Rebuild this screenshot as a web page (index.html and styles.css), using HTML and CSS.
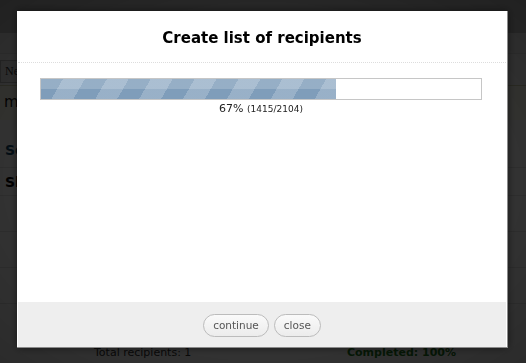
FILE: index.html
```html
<!DOCTYPE html>
<html lang="en">
<head>
    <meta charset="UTF-8">
    <meta name="viewport" content="width=device-width, initial-scale=1.0">
    <title>Create list of recipients</title>
    <link rel="stylesheet" href="styles.css">
</head>
<body>
    <div class="pagina">
        <div class="topo"></div>
        <div class="faixa"></div>
        <div class="barra_ferramentas">
            <button class="btn_novo">New</button>
        </div>
        <div class="aviso">mailing</div>
        <div class="linha linha_alta"><a class="link">Select recipients</a></div>
        <div class="linha"><b>Show recipients</b></div>
        <div class="linha vazia"></div>
        <div class="linha vazia"></div>
        <div class="linha vazia"></div>
        <div class="rodape_pagina">
            <span>Total recipients: 1</span>
            <b class="completo">Completed: 100%</b>
        </div>
    </div>

    <div class="sombra"></div>

    <div class="janela">
        <div class="janela_topo">
            <h1 class="titulo">Create list of recipients</h1>
        </div>
        <div class="janela_corpo">
            <div class="progresso">
                <div class="progresso_barra" style="width: 67%"></div>
            </div>
            <p class="progresso_texto">67% <small>(1415/2104)</small></p>
        </div>
        <div class="janela_rodape">
            <button class="btn">continue</button>
            <button class="btn">close</button>
        </div>
    </div>
</body>
</html>
```

FILE: styles.css
```css
*{
    margin: 0;
    padding: 0;
    box-sizing: border-box;
}
body{
    width: 526px;
    height: 363px;
    overflow: hidden;
    font-family: "DejaVu Sans", Verdana, sans-serif;
    background-color: #fff;
}

/* pagina de fundo */
.pagina{
    height: 363px;
    display: flex;
    flex-direction: column;
}
.topo{
    height: 33px;
    background-color: #c4c4c4;
}
.faixa{
    height: 21px;
    background-color: #f2f2f2;
    border-bottom: 1px solid #e0e0e0;
}
.barra_ferramentas{
    height: 32px;
    padding-top: 6px;
    background-color: #f6f6f6;
    border-bottom: 1px solid #d5d5b0;
}
.btn_novo{
    font-family: "Liberation Serif", serif;
    font-size: 12px;
    padding: 3px 4px;
    background-color: #eee;
    border: 1px solid #bbb;
    color: #333;
}
.aviso{
    height: 34px;
    padding: 7px 4px;
    background-color: #fffff0;
    font-size: 15px;
    color: #111;
}
.linha{
    height: 28px;
    padding: 6px 5px;
    border-bottom: 1px solid #e4e4e4;
    font-size: 14px;
    color: #000;
}
.linha_alta{
    height: 48px;
    padding-top: 22px;
}
.link{
    color: #12486b;
    font-weight: bold;
}
.vazia{
    height: 36px;
}
.rodape_pagina{
    flex: 1;
    display: flex;
    justify-content: space-between;
    align-items: flex-end;
    padding: 0 70px 4px 94px;
    font-size: 11px;
    color: #333;
}
.completo{
    color: #1e7a1e;
}

.sombra{
    position: fixed;
    top: 0;
    left: 0;
    right: 0;
    bottom: 0;
    background: radial-gradient(ellipse at center, rgba(0,0,0,0.78) 40%, rgba(0,0,0,0.83) 100%);
}

/* janela */
.janela{
    position: fixed;
    top: 11px;
    left: 17px;
    width: 491px;
    height: 337px;
    background-color: #fff;
    padding: 1px 1px 0 1px;
    border-right: 1px solid #8a8a8a;
    border-bottom: 1px solid #8a8a8a;
    box-shadow: 0 0 8px rgba(0,0,0,0.5);
    display: flex;
    flex-direction: column;
}
.janela_topo{
    height: 51px;
    border-bottom: 1px dotted #ddd;
    display: flex;
    justify-content: center;
    align-items: center;
}
.titulo{
    font-size: 15px;
    font-weight: bold;
    color: #000;
    padding-top: 1px;
}
.janela_corpo{
    flex: 1;
    padding: 15px 24px 0 22px;
}
.progresso{
    height: 22px;
    border: 1px solid #c6c6c6;
    background-color: #fff;
}
.progresso_barra{
    height: 100%;
    background-color: #7f9dba;
    background-image:
        linear-gradient(to bottom, rgba(255,255,255,0.18) 50%, rgba(255,255,255,0) 50%),
        repeating-linear-gradient(120deg, rgba(255,255,255,0) 0px, rgba(255,255,255,0) 19px, rgba(255,255,255,0.2) 19px, rgba(255,255,255,0.2) 38px);
}
.progresso_texto{
    text-align: center;
    font-size: 11px;
    color: #222;
    margin-top: 2px;
}
.progresso_texto small{
    font-size: 9px;
}
.janela_rodape{
    height: 45px;
    background-color: #eee;
    display: flex;
    justify-content: center;
    align-items: center;
    gap: 5px;
    padding-top: 1px;
}
.btn{
    font-family: "DejaVu Sans", Verdana, sans-serif;
    font-size: 10.5px;
    color: #555;
    height: 23px;
    padding: 0 9px;
    border: 1px solid #bcbcbc;
    border-radius: 12px;
    background: linear-gradient(to bottom, #fafafa, #ececec);
}
```
